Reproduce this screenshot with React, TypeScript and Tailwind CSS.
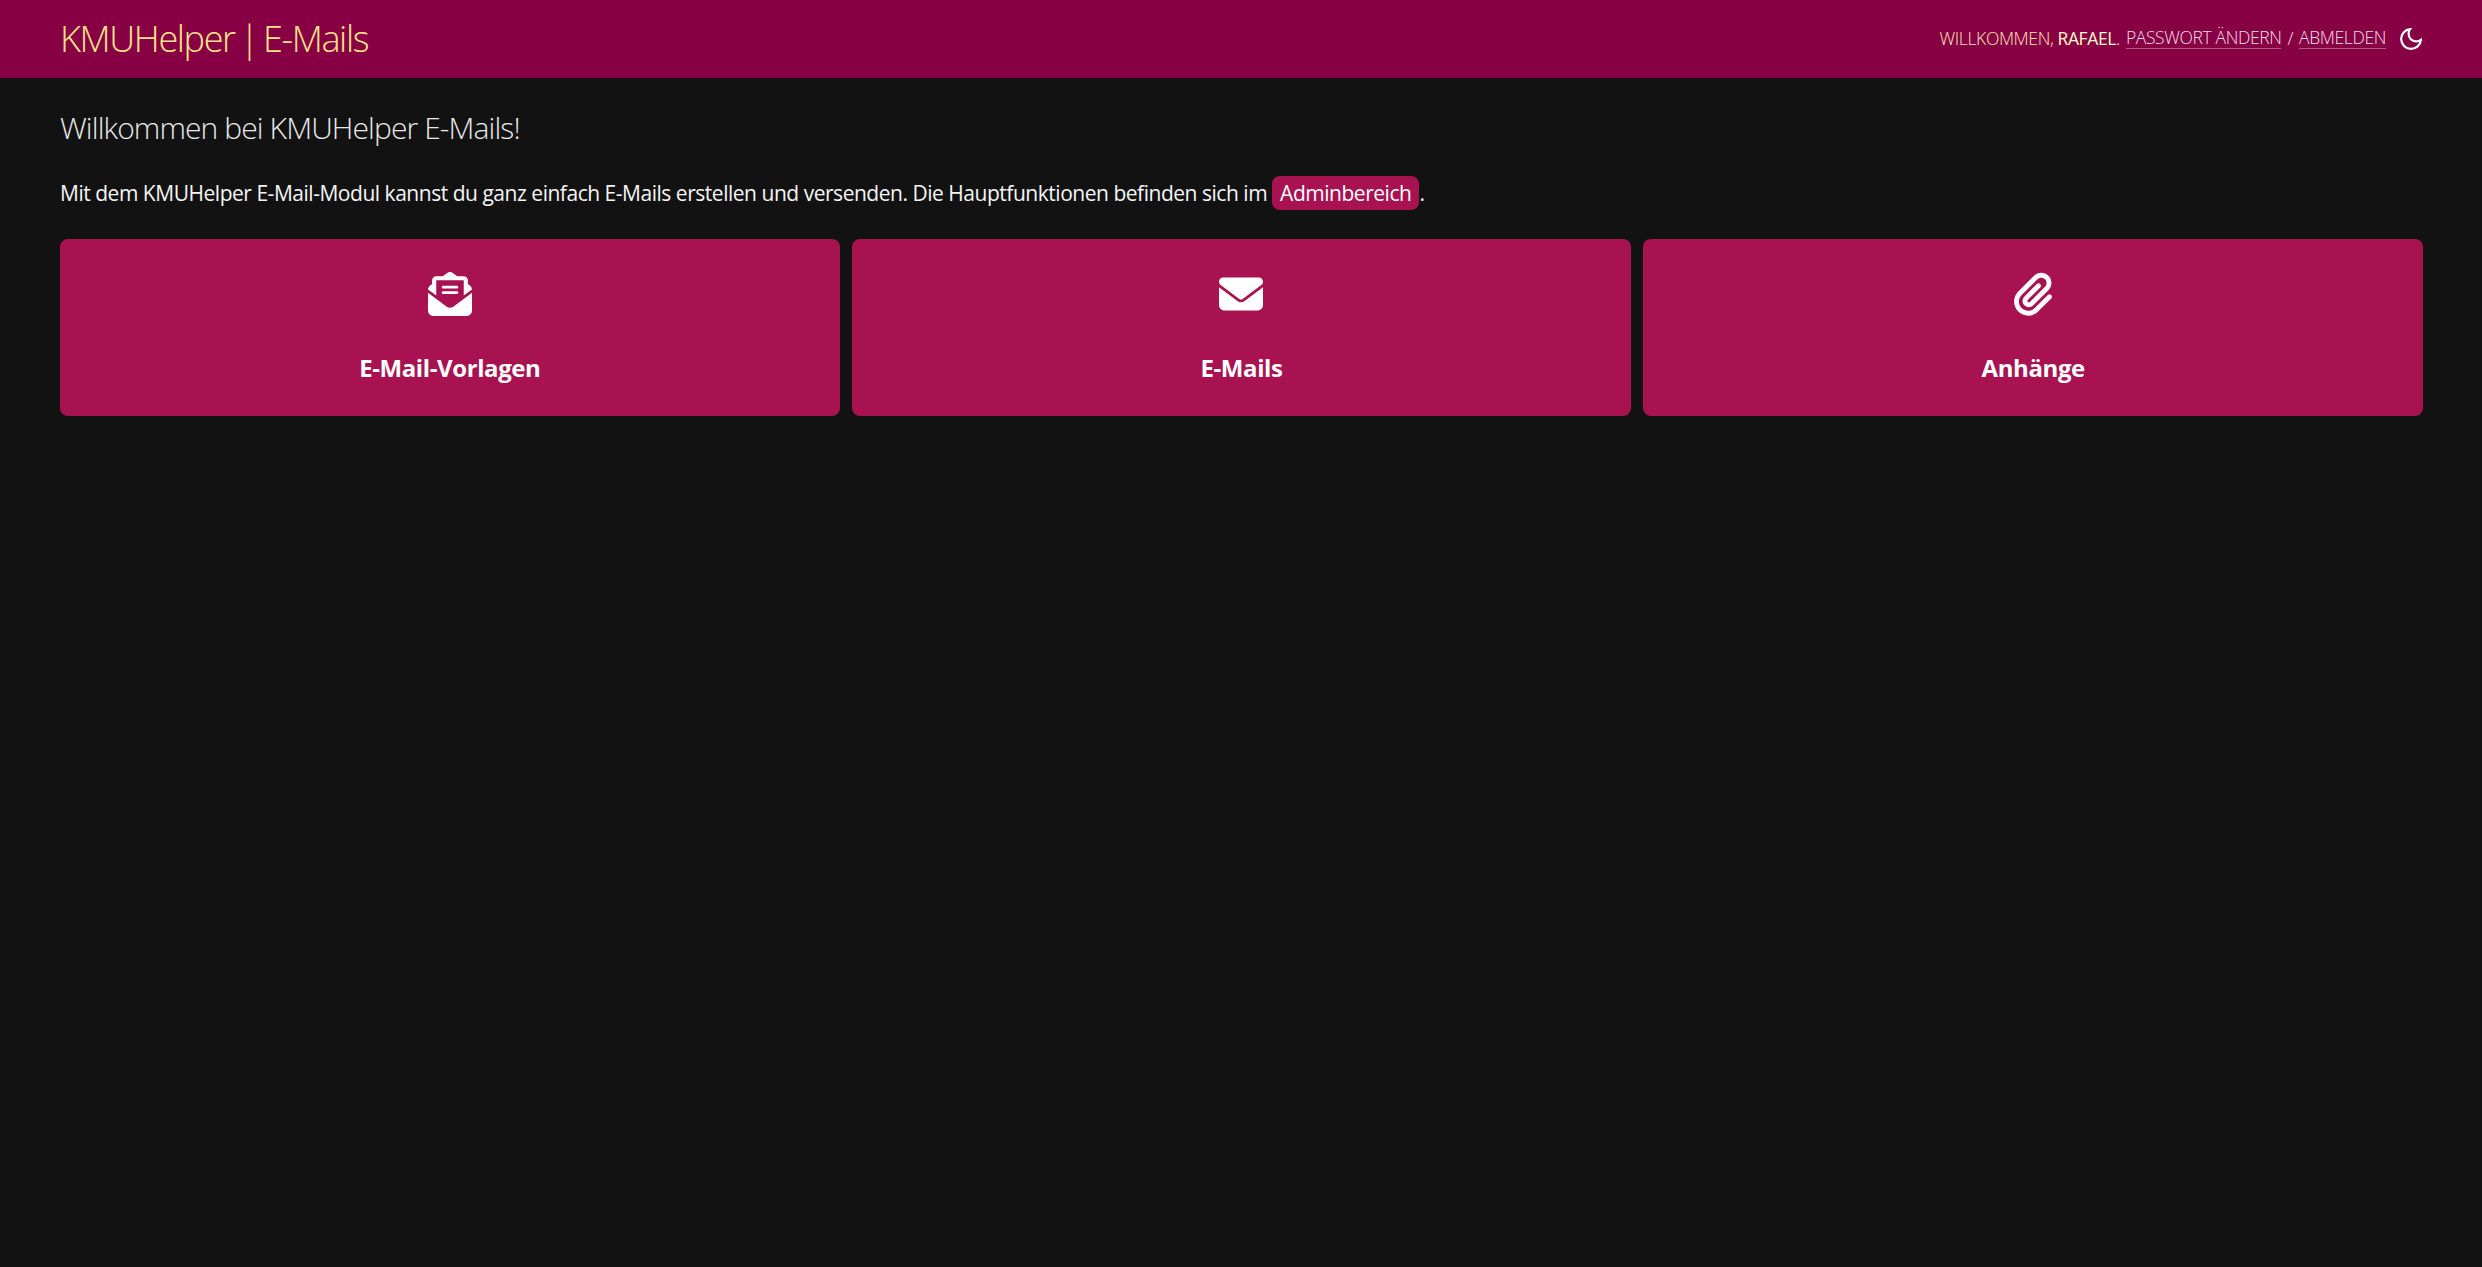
import React from 'react';
import { FaEnvelope, FaEnvelopeOpenText, FaPaperclip } from 'react-icons/fa6';
import { IconType } from 'react-icons';

interface Tile {
  title: string;
  icon: IconType;
}

const tiles: Tile[] = [
  { title: 'E-Mail-Vorlagen', icon: FaEnvelopeOpenText },
  { title: 'E-Mails', icon: FaEnvelope },
  { title: 'Anhänge', icon: FaPaperclip },
];

const App: React.FC = () => {
  return (
    <div className="min-h-screen bg-[#121212] text-[#f5f5f5] font-['Open_Sans',sans-serif]">
      {/* Header */}
      <header className="h-[78px] bg-[#880044] flex items-center justify-between px-[60px]">
        <h1 className="text-[36px] font-light text-[#fde68a] tracking-[-1.35px] [word-spacing:-3px]">KMUHelper | E-Mails</h1>
        <div className="flex items-center text-[17.5px] font-light text-[#f8e8b8] tracking-[-0.37px]">
          <span className="pb-[2px]">
            WILLKOMMEN, <strong className="font-normal text-[#ffffcc]">RAFAEL</strong>.
          </span>
          <a className="ml-[6px] mb-[2px] text-[#f5dfe9] border-b border-[#b1557f] leading-[21px]">PASSWORT ÄNDERN</a>
          <span className="mx-[6px] pb-[2px] text-[#f5dfe9]">/</span>
          <a className="mb-[2px] text-[#f5dfe9] border-b border-[#b1557f] leading-[21px]">ABMELDEN</a>
          <svg viewBox="2 2 20 20" className="w-[22px] h-[22px] ml-[14px]" fill="none" stroke="white" strokeWidth="2">
            <path d="M21 12.8A9 9 0 1 1 11.2 3a7 7 0 0 0 9.8 9.8z" />
          </svg>
        </div>
      </header>

      {/* Content */}
      <main className="pl-[60px] pr-[59px]">
        <h2 className="mt-[28px] text-[30px] leading-[44px] font-light text-[#e8e8e8] tracking-[-0.9px]">
          Willkommen bei KMUHelper E-Mails!
        </h2>
        <p className="mt-[26px] text-[21px] leading-[33px] tracking-[-0.475px]">
          Mit dem KMUHelper E-Mail-Modul kannst du ganz einfach E-Mails erstellen und versenden. Die Hauptfunktionen befinden sich im{' '}
          <a className="inline-block bg-[#a91251] text-white rounded-[8px] px-[8px] pt-px">Adminbereich</a>.
        </p>
        <div className="mt-[29px] grid grid-cols-3 gap-3">
          {tiles.map(tile => (
            <a key={tile.title} className="h-[177px] rounded-[8px] bg-[#a91251] flex flex-col items-center pt-[33px] text-white">
              <tile.icon size={44} />
              <span className="mt-[34px] text-[24px] font-bold tracking-[-0.4px]">{tile.title}</span>
            </a>
          ))}
        </div>
      </main>
    </div>
  );
};

export default App;
